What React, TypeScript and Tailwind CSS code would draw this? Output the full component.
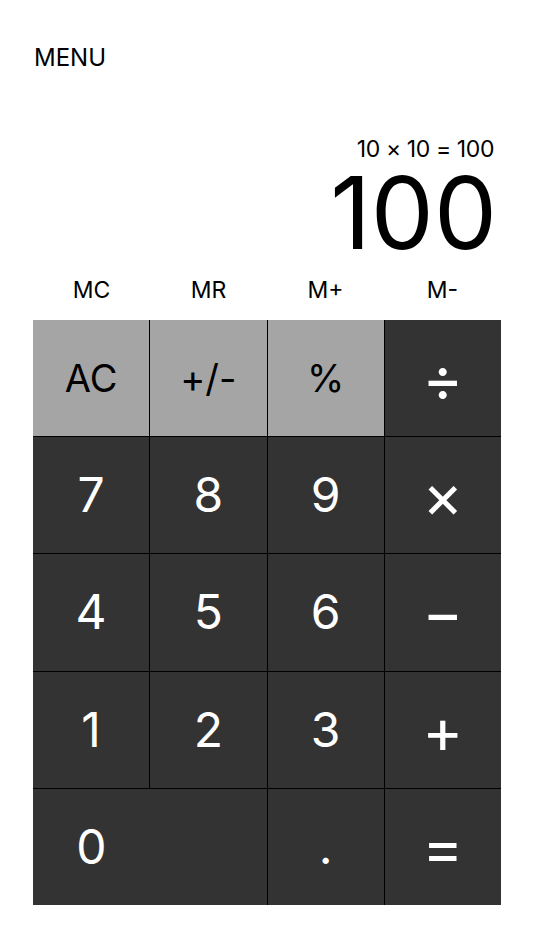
import React from 'react';

type Key = { label: string; kind: 'fn' | 'num' | 'op'; span?: boolean };

const keys: Key[] = [
  { label: 'AC', kind: 'fn' },
  { label: '+/-', kind: 'fn' },
  { label: '%', kind: 'fn' },
  { label: '÷', kind: 'op' },
  { label: '7', kind: 'num' },
  { label: '8', kind: 'num' },
  { label: '9', kind: 'num' },
  { label: '×', kind: 'op' },
  { label: '4', kind: 'num' },
  { label: '5', kind: 'num' },
  { label: '6', kind: 'num' },
  { label: '−', kind: 'op' },
  { label: '1', kind: 'num' },
  { label: '2', kind: 'num' },
  { label: '3', kind: 'num' },
  { label: '+', kind: 'op' },
  { label: '0', kind: 'num', span: true },
  { label: '.', kind: 'num' },
  { label: '=', kind: 'op' },
];

const memory = ['MC', 'MR', 'M+', 'M-'];

export default function App() {
  return (
    <div className="min-h-screen bg-white px-[33px] pt-[44px] font-['Inter',sans-serif] text-black">
      {/* Menu */}
      <div className="text-[24px] leading-[28px] pl-px">MENU</div>

      {/* Display */}
      <div className="mt-[65px] flex flex-col items-end">
        <div className="text-[23px] leading-[24px] tracking-[-0.4px] pr-[7px]">10 × 10 = 100</div>
        <div className="mt-[3px] text-[100px] leading-[97px] pr-[4px]">100</div>
      </div>

      {/* Memory row */}
      <div className="grid grid-cols-4 h-[59px] items-center text-[23px]">
        {memory.map((m) => (
          <div key={m} className="text-center">{m}</div>
        ))}
      </div>

      {/* Keypad */}
      <div className="grid grid-cols-4 grid-rows-5 gap-px bg-black h-[585px]">
        {keys.map((k) =>
          k.span ? (
            <button key={k.label} className="col-span-2 flex items-center bg-[#333333] text-white text-[48px]">
              <span className="w-1/2 text-center">{k.label}</span>
            </button>
          ) : (
            <button
              key={k.label}
              className={
                k.kind === 'fn'
                  ? 'flex items-center justify-center bg-[#a5a5a5] text-black text-[38px]'
                  : k.kind === 'op'
                  ? 'flex items-center justify-center bg-[#333333] text-white text-[62px] pt-[1px]'
                  : 'flex items-center justify-center bg-[#333333] text-white text-[48px]'
              }
            >
              {k.label}
            </button>
          )
        )}
      </div>
    </div>
  );
}
